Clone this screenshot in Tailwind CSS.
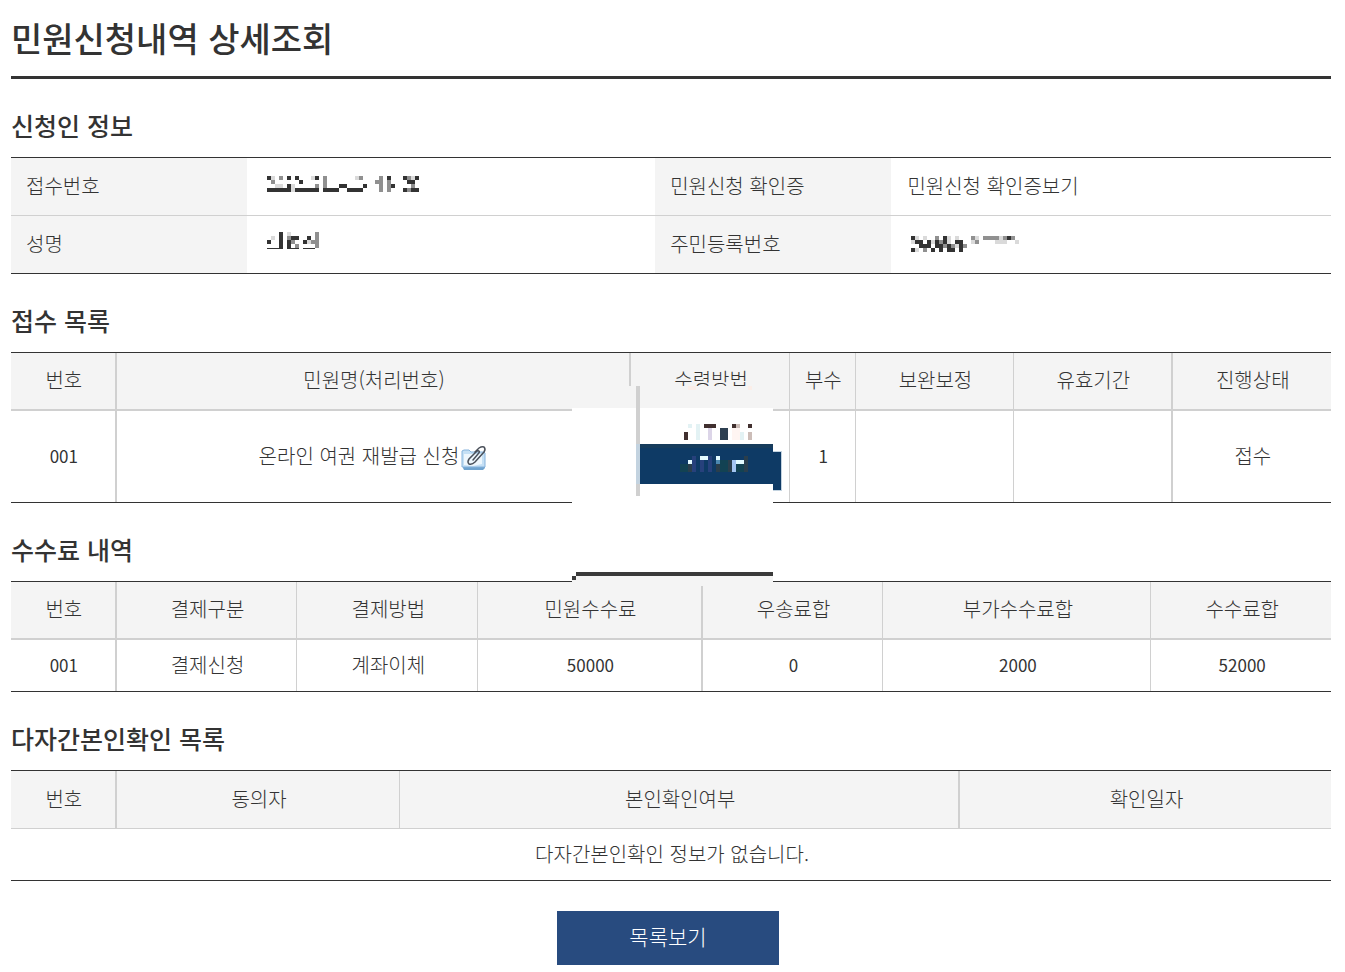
<!DOCTYPE html>
<html lang="ko">
<head>
    <meta charset="UTF-8">
    <meta name="viewport" content="width=device-width, initial-scale=1.0">
    <title>민원신청내역 상세조회</title>
    <script src="https://cdn.jsdelivr.net/npm/@tailwindcss/browser@4"></script>
</head>
<body class="bg-white text-[#333] font-light text-[20px] leading-7 font-['Noto_Sans_CJK_KR',sans-serif]">
    <main class="pl-[11px] pr-[14px] pt-3 pb-2 [&_th]:pb-0.5 [&_td]:pb-0.5">
        <h1 class="text-[34px] leading-[52px] font-medium pb-3 border-b-3 border-[#333]">민원신청내역 상세조회</h1>

        <!-- 신청인 정보 -->
        <section>
            <h2 class="mt-[30px] mb-4 text-[25px] leading-8 font-medium">신청인 정보</h2>
            <table class="w-full table-fixed border-separate border-spacing-0 border-y border-[#333] text-left">
                <colgroup>
                    <col class="w-[17.9%]"><col class="w-[30.9%]"><col class="w-[17.9%]"><col>
                </colgroup>
                <tbody>
                    <tr class="h-[58px]">
                        <th scope="row" class="bg-[#f4f4f4] border-b border-[#d0d0d0] px-[15px] font-light">접수번호</th>
                        <td class="border-b border-[#d0d0d0] px-5">
                            <svg class="h-4 w-[152px] mb-1" data-mosaic="#-.+.#.#...-#.+.......-+....+.#...#+-#|.+......#.....+............++.+....##.|..--.#-.....+.+...##....#...+.+#....+.|######-######.####..####....+.+...#+##" role="img" aria-label="접수번호 비공개"></svg>
                        </td>
                        <th scope="row" class="bg-[#f4f4f4] border-b border-[#d0d0d0] px-[15px] font-light">민원신청 확인증</th>
                        <td class="border-b border-[#d0d0d0] px-4"><a href="#">민원신청 확인증보기</a></td>
                    </tr>
                    <tr class="h-[57px]">
                        <th scope="row" class="bg-[#f4f4f4] px-[15px] font-light">성명</th>
                        <td class="px-5">
                            <svg class="h-5 w-[52px] mb-1" data-mosaic="...#.-......+|.-.#.+##..#.+|#..#.#+..#-++|...#.#.+....+|____.___.___." role="img" aria-label="성명 비공개"></svg>
                        </td>
                        <th scope="row" class="bg-[#f4f4f4] px-[15px] font-light">주민등록번호</th>
                        <td class="px-5">
                            <svg class="h-4 w-[112px]" data-mosaic="#-.-..+.#-.-...+-.++++-+#+..|-##.#-#+#-.##..-+....---..-.|..###.##+#+-#+..............|#-.+.#.#.##.#..............." role="img" aria-label="주민등록번호 비공개"></svg>
                        </td>
                    </tr>
                </tbody>
            </table>
        </section>

        <!-- 접수 목록 -->
        <section>
            <h2 class="mt-[30px] mb-4 text-[25px] leading-8 font-medium">접수 목록</h2>
            <div class="relative">
                <table class="w-full table-fixed border-separate border-spacing-0 border-y border-[#333] text-center">
                    <colgroup>
                        <col class="w-[8%]"><col class="w-[39%]"><col class="w-[12%]"><col class="w-[5%]"><col class="w-[12%]"><col class="w-[12%]"><col>
                    </colgroup>
                    <thead>
                        <tr class="h-[58px] bg-[#f4f4f4]">
                            <th scope="col" class="border-b-2 border-r-2 border-[#d0d0d0] pl-0.5 font-light">번호</th>
                            <th scope="col" class="border-b-2 border-r-2 border-[#d0d0d0] pl-0.5 font-light">민원명(처리번호)</th>
                            <th scope="col" class="border-b-2 border-r border-[#d0d0d0] pl-0.5 font-light">수령방법</th>
                            <th scope="col" class="border-b-2 border-r border-[#d0d0d0] pl-0.5 font-light">부수</th>
                            <th scope="col" class="border-b-2 border-r border-[#d0d0d0] pl-0.5 font-light">보완보정</th>
                            <th scope="col" class="border-b-2 border-r-2 border-[#d0d0d0] pl-0.5 font-light">유효기간</th>
                            <th scope="col" class="border-b-2 border-[#d0d0d0] pl-0.5 font-light">진행상태</th>
                        </tr>
                    </thead>
                    <tbody>
                        <tr class="h-[91px]">
                            <td class="border-r-2 border-[#d0d0d0] pl-0.5 text-[17px] font-normal">001</td>
                            <td class="border-r-2 border-[#d0d0d0]">
                                <div class="flex items-center justify-center gap-0.5">
                                    <span>온라인 여권 재발급 신청</span>
                                    <svg class="size-[26px] mt-1" viewBox="0 0 26 26" fill="none">
                                        <path d="M2 8h22v15l-2 2H3l-1-2z" fill="#6fa3cf"/>
                                        <path d="M1 6l2-1h5l2 2h13l1 1v14H1z" fill="#c5e0f5" stroke="#86b3dc"/>
                                        <path d="M3 9h18v10l-9 2-9-1z" fill="#eef7fd"/>
                                        <path d="M14 7l4-4q3-2 5-1 2 2 0 5l-9 10q-3 3-6 2-2-2 0-5l7-7q2-2 3-1 1 1-1 3l-5 6" stroke="#4a505a" stroke-width="1.5" stroke-linecap="round"/>
                                    </svg>
                                </div>
                            </td>
                            <td class="border-r border-[#d0d0d0]"></td>
                            <td class="border-r border-[#d0d0d0] pl-0.5 text-[17px] font-normal">1</td>
                            <td class="border-r border-[#d0d0d0]"></td>
                            <td class="border-r-2 border-[#d0d0d0]"></td>
                            <td class="pl-0.5">접수</td>
                        </tr>
                    </tbody>
                </table>
                <!-- 수령방법 열을 가리는 모자이크 -->
                <svg class="absolute left-[42.5%] top-[34px] w-[210px] h-[200px]" viewBox="572 386 210 200" shape-rendering="crispEdges" role="img" aria-label="수령방법 비공개">
                    <path d="M572 386h201v22H572zM572 576h201v10H572z" fill="#f4f4f4"/>
                    <path d="M572 408h201v168H572z" fill="#fff"/>
                    <path d="M636 386h4v110h-4z" fill="#d0d0d0"/>
                    <path d="M636 444h4v40h-4z" fill="#c3d3e0"/>
                    <path d="M773 451h9v40h-9z" fill="#c3d3e0"/>
                    <path d="M640 444h133v8h8v38h-8v-6H640z" fill="#0e3a65"/>
                    <path d="M640 444h133v4H640z" fill="#173c5c"/>
                    <path d="M688 386h8v4h-8zM748 386h4v4h-4z" fill="#fbeee8"/>
                    <path d="M576 572h197v4H576zM572 576h4v4h-4z" fill="#3a3a3a"/>
                    <path d="M704 424h12v4h-12zM684 432h4v8h-4zM748 424h4v4h-4zM732 424h4v4h-4z" fill="#41302f"/>
                    <path d="M720 428h8v12h-8z" fill="#2d3f51"/>
                    <path d="M708 428h4v12h-4z" fill="#dcd5e8"/>
                    <path d="M736 424h4v4h-4zM748 432h4v8h-4z" fill="#ccbdb8"/>
                    <path d="M688 424h4v4h-4zM696 424h4v16h-4zM740 432h4v8h-4z" fill="#e3f2f4"/>
                    <path d="M732 428h8v12h-8z" fill="#fff5f2"/>
                    <path d="M692 456h4v16h-4zM700 460h4v12h-4zM708 456h4v16h-4z" fill="#27417c"/>
                    <path d="M680 464h8v8h-8zM720 460h8v12h-8zM736 464h8v8h-8z" fill="#124253"/>
                    <path d="M688 464h4v8h-4zM716 464h4v8h-4zM728 460h4v12h-4zM744 456h4v16h-4z" fill="#2a3e4c"/>
                    <path d="M688 460h4v4h-4zM700 456h8v4h-8zM716 456h4v4h-4zM736 460h8v4h-8z" fill="#e2faff"/>
                    <path d="M716 460h4v4h-4z" fill="#4c88b0"/>
                    <path d="M732 460h4v12h-4z" fill="#a3c5f2"/>
                </svg>
            </div>
        </section>

        <!-- 수수료 내역 -->
        <section>
            <h2 class="mt-[30px] mb-4 text-[25px] leading-8 font-medium">수수료 내역</h2>
            <table class="w-full table-fixed border-separate border-spacing-0 border-y border-[#333] text-center">
                <colgroup>
                    <col class="w-[8%]"><col class="w-[13.7%]"><col class="w-[13.7%]"><col class="w-[17%]"><col class="w-[13.7%]"><col class="w-[20.3%]"><col>
                </colgroup>
                <thead>
                    <tr class="h-[58px] bg-[#f4f4f4]">
                        <th scope="col" class="border-b-2 border-r-2 border-[#d0d0d0] pl-0.5 font-light">번호</th>
                        <th scope="col" class="border-b-2 border-r border-[#d0d0d0] pl-0.5 font-light">결제구분</th>
                        <th scope="col" class="border-b-2 border-r border-[#d0d0d0] pl-0.5 font-light">결제방법</th>
                        <th scope="col" class="border-b-2 border-r-2 border-[#d0d0d0] pl-0.5 font-light">민원수수료</th>
                        <th scope="col" class="border-b-2 border-r border-[#d0d0d0] pl-0.5 font-light">우송료합</th>
                        <th scope="col" class="border-b-2 border-r border-[#d0d0d0] pl-0.5 font-light">부가수수료합</th>
                        <th scope="col" class="border-b-2 border-[#d0d0d0] pl-0.5 font-light">수수료합</th>
                    </tr>
                </thead>
                <tbody>
                    <tr class="h-[51px]">
                        <td class="border-r-2 border-[#d0d0d0] pl-0.5 text-[17px] font-normal">001</td>
                        <td class="border-r border-[#d0d0d0] pl-0.5">결제신청</td>
                        <td class="border-r border-[#d0d0d0] pl-0.5">계좌이체</td>
                        <td class="border-r-2 border-[#d0d0d0] pl-0.5 text-[17px] font-normal">50000</td>
                        <td class="border-r border-[#d0d0d0] pl-0.5 text-[17px] font-normal">0</td>
                        <td class="border-r border-[#d0d0d0] pl-0.5 text-[17px] font-normal">2000</td>
                        <td class="pl-0.5 text-[17px] font-normal">52000</td>
                    </tr>
                </tbody>
            </table>
        </section>

        <!-- 다자간본인확인 목록 -->
        <section>
            <h2 class="mt-[30px] mb-4 text-[25px] leading-8 font-medium">다자간본인확인 목록</h2>
            <table class="w-full table-fixed border-separate border-spacing-0 border-y border-[#333] text-center">
                <colgroup>
                    <col class="w-[8%]"><col class="w-[21.5%]"><col class="w-[42.4%]"><col>
                </colgroup>
                <thead>
                    <tr class="h-[58px] bg-[#f4f4f4]">
                        <th scope="col" class="border-b border-r-2 border-[#d0d0d0] pl-0.5 font-light">번호</th>
                        <th scope="col" class="border-b border-r border-[#d0d0d0] pl-0.5 font-light">동의자</th>
                        <th scope="col" class="border-b border-r-2 border-[#d0d0d0] pl-0.5 font-light">본인확인여부</th>
                        <th scope="col" class="border-b border-[#d0d0d0] pl-0.5 font-light">확인일자</th>
                    </tr>
                </thead>
                <tbody>
                    <tr class="h-[51px]">
                        <td colspan="4" class="pl-0.5">다자간본인확인 정보가 없습니다.</td>
                    </tr>
                </tbody>
            </table>
        </section>

        <div class="mt-[30px] pr-[6px] flex justify-center">
            <button type="button" class="w-[222px] h-[54px] pb-1 bg-[#284b7f] text-white text-[21px]">목록보기</button>
        </div>
    </main>

    <script>
        // 개인정보 모자이크: 한 글자가 4px 한 칸, '_'는 1px 밑줄, '|'는 줄바꿈
        const shades = { '#': '#333', '+': '#909090', '-': '#dadada', '_': '#333' };
        document.querySelectorAll('[data-mosaic]').forEach((svg) => {
            const rows = svg.dataset.mosaic.split('|');
            svg.setAttribute('viewBox', `0 0 ${rows[0].length * 4} ${rows.length * 4}`);
            svg.setAttribute('shape-rendering', 'crispEdges');
            svg.innerHTML = rows.map((row, y) => [...row].map((c, x) =>
                shades[c] ? `<rect x="${x * 4}" y="${y * 4}" width="4" height="${c === '_' ? 1 : 4}" fill="${shades[c]}"/>` : ''
            ).join('')).join('');
        });
    </script>
</body>
</html>
